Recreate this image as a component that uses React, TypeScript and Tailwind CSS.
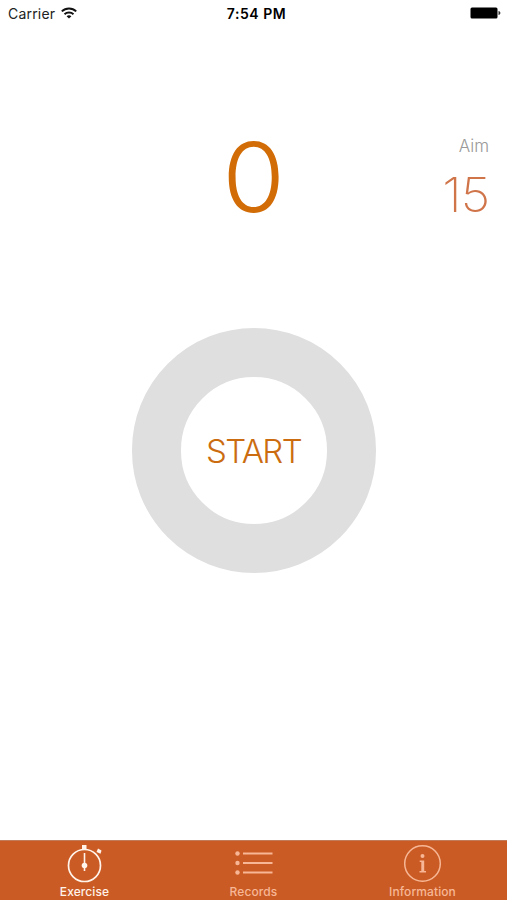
import type { ReactNode } from "react";

function StatusBar() {
  return (
    <header className="grid h-[27px] grid-cols-3 items-center pl-2 pr-[6px] text-black">
      <div className="flex items-center gap-[6px] text-[14px] leading-none text-[#222]">
        <span className="pt-px tracking-[0.2px]">Carrier</span>
        <svg width="16" height="12" viewBox="0 0 16 12" fill="none" stroke="#111" strokeWidth="1.9" className="mb-px">
          <path d="M0.8 4.4C4.8 0.5 11.2 0.5 15.2 4.4" />
          <path d="M3.5 7.2C6 4.9 10 4.9 12.5 7.2" />
          <path d="M8 11.6L5.6 9.2C7 8 9 8 10.4 9.2Z" fill="#111" stroke="none" />
        </svg>
      </div>
      <time className="pl-[4px] pt-px text-center text-[14px] font-semibold leading-none tracking-[0.55px]">7:54 PM</time>
      <svg className="mb-px justify-self-end" width="31" height="12" viewBox="0 0 31 12">
        <rect x="0.5" y="0.5" width="27" height="11" rx="1.5" fill="#000" />
        <path d="M28.5 4C31 4.4 31 7.6 28.5 8Z" fill="#333" />
      </svg>
    </header>
  );
}

function Tab({ label, active, children }: { label: string; active?: boolean; children: ReactNode }) {
  return (
    <button className={`flex flex-col items-center ${active ? "text-[#fff3ea]" : "text-[#f7b796]"}`}>
      <svg width="42" height="43" viewBox="0 0 42 43" fill="none" stroke="currentColor">
        {children}
      </svg>
      <span className="text-[12px] font-medium leading-[15px] tracking-[0.1px]">{label}</span>
    </button>
  );
}

export default function App() {
  return (
    <div className="flex h-[900px] w-[507px] flex-col overflow-hidden bg-white font-['Inter','Liberation_Sans',sans-serif]">
      <StatusBar />
      <main className="flex flex-1 flex-col">
        <section className="grid h-[301px] grid-cols-3 pt-[100px]">
          <div />
          <div className="text-center text-[96px] font-light leading-[100px] text-[#d26c06]">
            <span className="inline-block origin-center scale-x-[1.06]">0</span>
          </div>
          <div className="flex flex-col items-end pr-[18px]">
            <span className="pt-[9px] text-[17px] font-light leading-[20px] text-[#999]">Aim</span>
            <span className="mt-[9px] origin-right scale-x-[1.06] text-[48px] font-extralight leading-[60px] tracking-[-1px] text-[#d0744a]">15</span>
          </div>
        </section>
        <button className="ml-[132px] flex h-[245px] w-[244px] items-center justify-center rounded-full border-[49px] border-[#dfdfdf] pr-[1px] pt-[2px] text-[33px] font-light tracking-[-1.6px] text-[#cb6c10]">
          START
        </button>
      </main>
      <nav className="grid h-[60px] grid-cols-3 border-t border-[#c17b59] bg-[#ca5b24]">
        <Tab label="Exercise" active>
          <circle cx="20.5" cy="24.5" r="16" strokeWidth="1.7" />
          <path d="M20.5 12V30" strokeWidth="1.6" />
          <circle cx="20.5" cy="24.5" r="2.8" fill="currentColor" stroke="none" />
          <rect x="18" y="4" width="4.5" height="5" fill="currentColor" stroke="none" />
          <path d="M34 7.5L37.5 9.5L36.5 12.8L32.5 11Z" fill="currentColor" stroke="none" />
        </Tab>
        <Tab label="Records">
          <g fill="currentColor" stroke="none">
            <circle cx="4.5" cy="12.5" r="2.2" />
            <circle cx="4.5" cy="22" r="2.2" />
            <circle cx="4.5" cy="31.5" r="2.2" />
          </g>
          <path d="M10 12.5H39.5M10 22H39.5M10 31.5H39.5" strokeWidth="1.8" />
        </Tab>
        <Tab label="Information">
          <circle cx="20.5" cy="22.5" r="17.8" strokeWidth="1.5" />
          <circle cx="20.5" cy="15" r="2" fill="currentColor" stroke="none" />
          <path d="M17.7 19.5H22.2V30H24V31.5H17.5V30H19.3V21H17.7Z" fill="currentColor" stroke="none" />
        </Tab>
      </nav>
    </div>
  );
}
